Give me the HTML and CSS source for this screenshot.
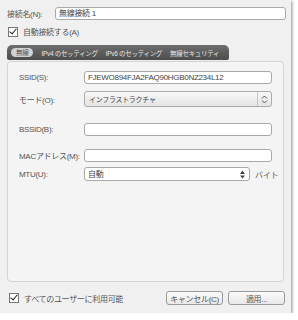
FILE: index.html
```html
<!DOCTYPE html>
<html lang="ja">
<head>
  <meta charset="UTF-8">
  <title>接続の編集</title>
  <link rel="stylesheet" href="styles.css">
</head>
<body>
  <div class="window">
    <div class="name-row">
      <span class="label">接続名(N):</span>
      <div class="field name-field">無線接続 1</div>
    </div>
    <div class="check-row">
      <span class="checkbox checked"></span>
      <span>自動接続する(A)</span>
    </div>
    <div class="tabs">
      <span class="tab active">無線</span>
      <span class="tab">IPv4 のセッティング</span>
      <span class="tab">IPv6 のセッティング</span>
      <span class="tab">無線セキュリティ</span>
    </div>
    <div class="panel">
      <div class="row row-ssid">
        <span class="label">SSID(S):</span>
        <div class="field">FJEWO894FJA2FAQ90HGB0NZ234L12</div>
      </div>
      <div class="row row-mode">
        <span class="label">モード(O):</span>
        <div class="select">
          <span class="select-text">インフラストラクチャ</span>
          <span class="select-arrow">
            <svg width="7" height="9" viewBox="0 0 7 9"><path d="M1 3.5 L3.5 1 L6 3.5 M1 5.5 L3.5 8 L6 5.5" fill="none" stroke="#555" stroke-width="1"/></svg>
          </span>
        </div>
      </div>
      <div class="row row-bssid">
        <span class="label">BSSID(B):</span>
        <div class="field"></div>
      </div>
      <div class="row row-mac">
        <span class="label">MACアドレス(M):</span>
        <div class="field"></div>
      </div>
      <div class="row row-mtu">
        <span class="label">MTU(U):</span>
        <div class="field spin">
          <span>自動</span>
          <span class="spin-arrows">
            <svg width="5" height="9" viewBox="0 0 5 9"><path d="M0 4 L2.5 0.5 L5 4 Z M0 5.5 L5 5.5 L2.5 8.5 Z" fill="#444"/></svg>
          </span>
        </div>
        <span class="unit">バイト</span>
      </div>
    </div>
    <div class="footer">
      <div class="check-row all-users">
        <span class="checkbox checked"></span>
        <span>すべてのユーザーに利用可能</span>
      </div>
      <div class="buttons">
        <button class="btn">キャンセル(C)</button>
        <button class="btn">適用...</button>
      </div>
    </div>
  </div>
</body>
</html>
```

FILE: styles.css
```css
body {
  margin: 0;
  background: #ffffff;
  font-family: "Liberation Sans", "Noto Sans CJK JP", sans-serif;
  font-size: 8px;
  letter-spacing: -0.3px;
  color: #555;
}

.window {
  width: 291px;
  height: 313px;
  box-sizing: border-box;
  background: #f0f0f0;
  box-shadow: 1px 1px 3px rgba(0, 0, 0, 0.45);
  padding: 7px 5px 0 7px;
  display: flex;
  flex-direction: column;
}

.name-row {
  display: flex;
  align-items: center;
  height: 13px;
}

.name-row .label {
  width: 48px;
}

.field {
  box-sizing: border-box;
  width: 188px;
  height: 13px;
  background: #fff;
  border: 1px solid #a8a8a8;
  border-radius: 3px;
  padding: 0 3px;
  line-height: 11px;
  color: #444;
  white-space: nowrap;
  overflow: hidden;
}

.name-field {
  flex: 1;
}

.check-row {
  display: flex;
  align-items: center;
  gap: 5px;
  margin-top: 6px;
  height: 11px;
  padding-left: 1px;
}

.checkbox {
  box-sizing: border-box;
  width: 10px;
  height: 10px;
  border: 1px solid #777;
  background: #fff;
  position: relative;
}

.checkbox.checked::after {
  content: "";
  position: absolute;
  left: 2px;
  top: -1px;
  width: 3px;
  height: 6px;
  border: solid #222;
  border-width: 0 1px 1px 0;
  transform: rotate(40deg);
}

.tabs {
  margin-top: 8px;
  align-self: flex-start;
  height: 15px;
  box-sizing: border-box;
  padding: 0 10px 0 4px;
  display: flex;
  align-items: center;
  gap: 8px;
  background: linear-gradient(#6e6e6e, #4c4c4c);
  border-radius: 5px 5px 2px 2px;
}

.tab {
  color: #e6e6e6;
  white-space: nowrap;
  font-size: 6.5px;
  letter-spacing: -0.3px;
}

.tab.active {
  background: #d2d2d2;
  color: #555;
  border-radius: 5px;
  padding: 0 5px;
  line-height: 9px;
}

.panel {
  margin-top: 1px;
  margin-right: 2px;
  height: 221px;
  box-sizing: border-box;
  background: #f4f4f4;
  border: 1px solid #d4d4d4;
  border-radius: 4px;
  padding: 9px 0 0 11px;
  display: flex;
  flex-direction: column;
}

.row {
  display: flex;
  align-items: center;
}

.row .label {
  width: 65px;
  white-space: nowrap;
}

.row-mode {
  margin-top: 7px;
}

.row-bssid {
  margin-top: 16px;
}

.row-mac {
  margin-top: 13px;
}

.row-mtu {
  margin-top: 5px;
}

.select {
  box-sizing: border-box;
  width: 188px;
  height: 16px;
  display: flex;
  align-items: center;
  border: 1px solid #aaa;
  border-radius: 3px;
  background: linear-gradient(#f8f8f8, #e4e4e4);
  color: #444;
}

.select-text {
  flex: 1;
  padding-left: 4px;
  font-size: 7px;
}

.select-arrow {
  width: 13px;
  height: 14px;
  border-left: 1px solid #c4c4c4;
  display: flex;
  align-items: center;
  justify-content: center;
}

.spin {
  width: 166px;
  height: 14px;
  display: flex;
  align-items: center;
  justify-content: space-between;
}

.spin-arrows {
  display: flex;
  align-items: center;
  padding-right: 1px;
}

.unit {
  margin-left: 5px;
}

.footer {
  margin-top: 9px;
  display: flex;
  align-items: center;
  justify-content: space-between;
  padding-right: 1px;
}

.all-users {
  margin-top: 0;
  padding-left: 2px;
}

.buttons {
  display: flex;
  gap: 5px;
}

.btn {
  box-sizing: border-box;
  width: 57px;
  height: 14px;
  padding: 0;
  font-family: inherit;
  font-size: 8px;
  letter-spacing: -0.3px;
  color: #555;
  background: linear-gradient(#fafafa, #e8e8e8);
  border: 1px solid #9a9a9a;
  border-radius: 3px;
}
```
